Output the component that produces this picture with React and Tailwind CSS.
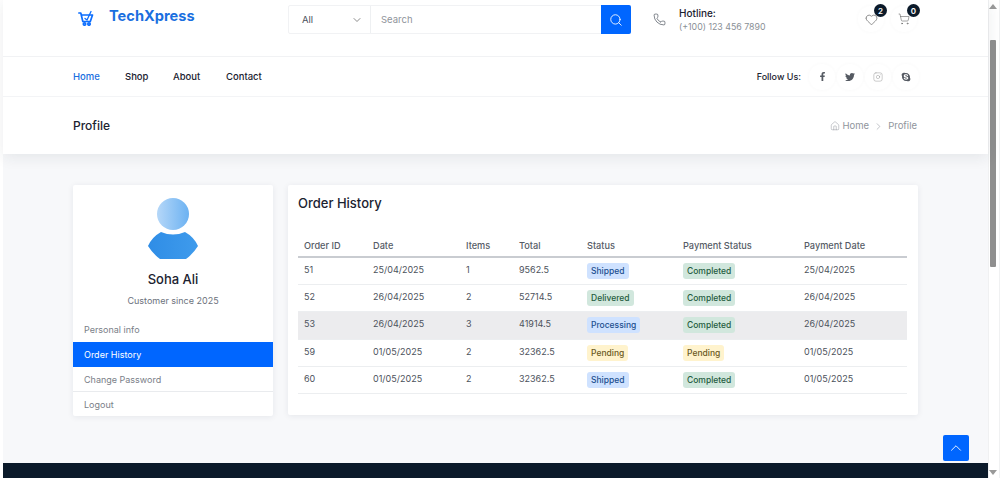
import { Search, Phone, Heart, ShoppingCart, House, ChevronRight, ChevronDown, ChevronUp, Instagram } from 'lucide-react';
import { FaFacebookF, FaTwitter, FaSkype } from 'react-icons/fa';

const orders = [
  { id: 51, date: '25/04/2025', items: 1, total: '9562.5', status: 'Shipped', payment: 'Completed', paid: '25/04/2025' },
  { id: 52, date: '26/04/2025', items: 2, total: '52714.5', status: 'Delivered', payment: 'Completed', paid: '26/04/2025' },
  { id: 53, date: '26/04/2025', items: 3, total: '41914.5', status: 'Processing', payment: 'Completed', paid: '26/04/2025', active: true },
  { id: 59, date: '01/05/2025', items: 2, total: '32362.5', status: 'Pending', payment: 'Pending', paid: '01/05/2025' },
  { id: 60, date: '01/05/2025', items: 2, total: '32362.5', status: 'Shipped', payment: 'Completed', paid: '01/05/2025' },
];

const badgeStyles = {
  Shipped: 'bg-[#cfe2ff] text-[#1c4f8f]',
  Processing: 'bg-[#cfe2ff] text-[#1c4f8f]',
  Delivered: 'bg-[#d1e7dd] text-[#1f5c40]',
  Completed: 'bg-[#d1e7dd] text-[#1f5c40]',
  Pending: 'bg-[#fff3cd] text-[#6b5a1e]',
};

function Badge({ label }) {
  return (
    <span className={`inline-block rounded-[3px] px-[4px] py-[3px] text-[8.5px] leading-[10px] font-medium ${badgeStyles[label]}`}>
      {label}
    </span>
  );
}

function Logo() {
  return (
    <svg width="16" height="16" viewBox="0 0 16 16" fill="none" stroke="#0d6efd" strokeWidth="1.7" strokeLinejoin="round" strokeLinecap="round">
      <path d="M.8 3h2l2 8.5h7.5L14.5 5H4" />
      <path d="M7 8.5l2 1.5 4-8.5" strokeWidth="1.3" />
      <circle cx="6.5" cy="14" r="1.2" />
      <circle cx="11" cy="14" r="1.2" />
    </svg>
  );
}

function Avatar() {
  return (
    <svg width="52" height="62" viewBox="0 0 52 62" className="mx-auto">
      <defs>
        <linearGradient id="head" x1="0" x2="1">
          <stop offset="0" stopColor="#b5d7f8" />
          <stop offset="1" stopColor="#6cb2f2" />
        </linearGradient>
        <linearGradient id="body" x1="0" x2="1">
          <stop offset="0" stopColor="#2f8de6" />
          <stop offset="1" stopColor="#3f9bec" />
        </linearGradient>
      </defs>
      <circle cx="26" cy="16" r="16" fill="url(#head)" />
      <path d="M14 34Q26 39 38 34Q47 39 51 48Q46 56 39 61H13Q6 56 1 48Q5 39 14 34Z" fill="url(#body)" />
    </svg>
  );
}

function Sidebar() {
  return (
    <div className="w-[200px] h-[231px] bg-white rounded-[2px] shadow-[0_1px_6px_rgba(30,40,60,0.08)]">
      <div className="pt-[13px]">
        <Avatar />
      </div>
      <div className="mt-[10px] text-center text-[13px] leading-[18px] font-medium text-[#1b2230]">Soha Ali</div>
      <div className="mt-[7px] text-center text-[9px] leading-[12px] text-[#6c727c]">Customer since 2025</div>
      <div className="mt-[10px] text-[9px] text-[#7a8088]">
        <div className="h-[25px] pl-[11px] pt-px flex items-center">Personal info</div>
        <div className="h-[25px] pl-[11px] pt-px flex items-center bg-[#0066ff] text-white">Order History</div>
        <div className="h-[25px] pl-[11px] pt-px flex items-center border-b border-[#e9ebee]">Change Password</div>
        <div className="h-[24px] pl-[11px] pt-px flex items-center">Logout</div>
      </div>
    </div>
  );
}

function OrderTable() {
  const headers = ['Order ID', 'Date', 'Items', 'Total', 'Status', 'Payment Status', 'Payment Date'];
  const widths = ['w-[69px]', 'w-[93px]', 'w-[53px]', 'w-[68px]', 'w-[96px]', 'w-[121px]', 'w-[109px]'];
  return (
    <table className="w-[609px] table-fixed border-collapse text-[9px] text-[#4c525c]">
      <thead>
        <tr className="h-[23px] border-b-2 border-[#c9ccd1]">
          {headers.map((h, i) => (
            <th key={h} className={`${widths[i]} pl-[6px] pt-[1px] text-left text-[9.2px] font-medium text-[#565c66]`}>{h}</th>
          ))}
        </tr>
      </thead>
      <tbody>
        {orders.map((o) => (
          <tr key={o.id} className={`border-b border-[#eceef0] ${o.active ? 'h-[28px] bg-[#ececee]' : 'h-[27px]'}`}>
            <td className="pl-[6px] pb-[2px]">{o.id}</td>
            <td className="pl-[6px] pb-[2px]">{o.date}</td>
            <td className="pl-[6px] pb-[2px]">{o.items}</td>
            <td className="pl-[6px] pb-[2px]">{o.total}</td>
            <td className="pl-[6px]"><Badge label={o.status} /></td>
            <td className="pl-[6px]"><Badge label={o.payment} /></td>
            <td className="pl-[6px] pb-[2px]">{o.paid}</td>
          </tr>
        ))}
      </tbody>
    </table>
  );
}

function IconBadge({ count, children }) {
  return (
    <div className="relative w-[26px] h-[26px] flex items-center justify-center rounded-full shadow-[0_0_4px_rgba(0,0,0,0.03)]">
      {children}
      <span className="absolute top-[-2px] right-[-3px] w-[13px] h-[13px] rounded-full bg-[#0b1a2a] text-white text-[8px] font-semibold flex items-center justify-center">
        {count}
      </span>
    </div>
  );
}

function SocialIcon({ children }) {
  return (
    <span className="w-[26px] h-[26px] mx-px flex items-center justify-center rounded-full shadow-[0_0_4px_rgba(0,0,0,0.03)]">
      {children}
    </span>
  );
}

function Header() {
  return (
    <header className="relative bg-white shadow-[0_3px_14px_rgba(30,40,60,0.09)]">
      <div className="h-[57px] pl-[75px] flex items-start border-b border-[#f1f2f4]">
        <div className="w-[210px] pt-[10px] flex items-start">
          <Logo />
          <span className="ml-[15px] -mt-[6px] text-[14.6px] leading-[24px] font-bold text-[#1a6fe0]">TechXpress</span>
        </div>
        <div className="mt-[5px] w-[343px] h-[29px] flex rounded-[2px] border border-[#f1f2f4] text-[9.5px]">
          <div className="w-[82px] pl-[13px] pr-[7px] pt-px flex items-center justify-between border-r border-[#eef0f2] text-[#4c525c]">
            All
            <ChevronDown size={12} strokeWidth={1.5} className="text-[#666]" />
          </div>
          <div className="flex-1 pl-[10px] pt-px flex items-center text-[#8f949b]">Search</div>
          <div className="w-[30px] -my-px -mr-px bg-[#0066ff] rounded-r-[2px] flex items-center justify-center">
            <Search size={14} strokeWidth={1.5} className="text-white" />
          </div>
        </div>
        <div className="ml-[22px] mt-[13px] w-[14px]">
          <Phone size={13} strokeWidth={1.3} className="text-[#4c525c]" />
        </div>
        <div className="ml-[12px] w-[165px] pt-[7px]">
          <div className="text-[10px] leading-[13px] font-medium text-[#1b2230]">Hotline:</div>
          <div className="text-[8.8px] leading-[13px] text-[#8a8f96]">(+100) 123 456 7890</div>
        </div>
        <div className="mt-[6px] flex gap-[7px] ml-[14px]">
          <IconBadge count={2}><Heart size={13} strokeWidth={1.2} className="text-[#555]" /></IconBadge>
          <IconBadge count={0}><ShoppingCart size={12} strokeWidth={1.2} className="text-[#666]" /></IconBadge>
        </div>
      </div>
      <div className="h-[40px] pl-[70px] pr-[68px] flex items-center justify-between border-b border-[#f3f4f6] text-[9.5px] font-medium text-[#1b2230]">
        <nav className="flex pt-px">
          <span className="w-[52px] text-[#1a6fe0]">Home</span>
          <span className="w-[48px]">Shop</span>
          <span className="w-[53px]">About</span>
          <span>Contact</span>
        </nav>
        <div className="flex items-center">
          <span className="mr-[7px] text-[9px]">Follow Us:</span>
          <div className="flex text-[#555a62]">
            <SocialIcon><FaFacebookF size={9} /></SocialIcon>
            <SocialIcon><FaTwitter size={10} /></SocialIcon>
            <SocialIcon><Instagram size={10} strokeWidth={1.2} className="text-[#999]" /></SocialIcon>
            <SocialIcon><FaSkype size={10} /></SocialIcon>
          </div>
        </div>
      </div>
      <div className="h-[57px] pl-[70px] pr-[71px] pt-px flex items-center justify-between">
        <h1 className="text-[12px] font-medium text-[#1b2230]">Profile</h1>
        <div className="flex items-center text-[9.5px] leading-[12px] text-[#90959c]">
          <House size={10} strokeWidth={1.2} />
          <span className="ml-[3px]">Home</span>
          <ChevronRight size={11} strokeWidth={1.2} className="mx-[4px]" />
          <span>Profile</span>
        </div>
      </div>
    </header>
  );
}

function FakeScrollbar() {
  return (
    <aside className="w-[12px] pr-[2px] bg-white flex flex-col items-center border-x border-[#f0f1f2]">
      <div className="mt-[4px] w-0 h-0 border-x-[4px] border-x-transparent border-b-[5px] border-b-[#999]" />
      <div className="mt-[31px] w-[6px] h-[227px] bg-[#8f8f8f] rounded-[1px]" />
      <div className="mt-auto mb-[3px] w-0 h-0 border-x-[4px] border-x-transparent border-t-[5px] border-t-[#999]" />
    </aside>
  );
}

export default function App() {
  return (
    <div className="relative h-[478px] w-[1000px] overflow-hidden flex bg-white font-['Inter',sans-serif]">
      <main className="flex-1 pl-[3px] flex flex-col">
        <Header />
        <section className="flex-1 pt-[31px] pl-[70px] flex gap-[15px] bg-[#f7f8fa]">
          <Sidebar />
          <div className="w-[630px] h-[230px] bg-white rounded-[2px] shadow-[0_1px_6px_rgba(30,40,60,0.08)] pl-[10px] pt-[10px]">
            <h2 className="text-[13px] leading-[17px] font-medium text-[#1b2230] mb-[22px]">Order History</h2>
            <OrderTable />
          </div>
        </section>
        <footer className="h-[15px] bg-[#0b1a2a]" />
      </main>
      <FakeScrollbar />
      <button className="absolute left-[943px] top-[435px] w-[26px] h-[26px] rounded-[2px] bg-[#0066ff] flex items-center justify-center">
        <ChevronUp size={18} strokeWidth={1.2} className="text-white" />
      </button>
    </div>
  );
}
